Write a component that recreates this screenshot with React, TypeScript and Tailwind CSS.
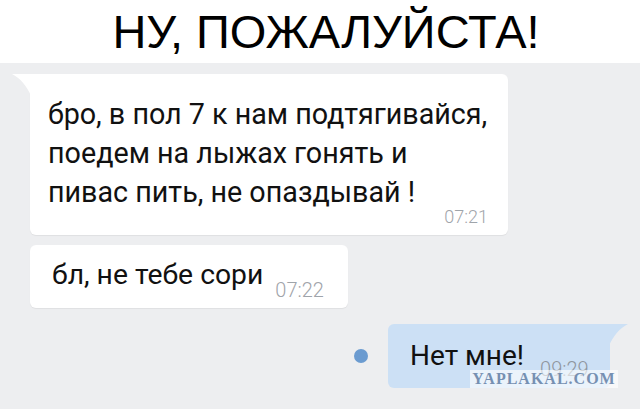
export default function App() {
  return (
    <div className="w-[640px] h-[409px] overflow-hidden bg-[#edeef0] relative font-['Roboto',sans-serif]">
      {/* Title */}
      <div className="h-[63px] bg-white flex items-center justify-center pl-3">
        <h1 className="font-['Liberation_Sans',Arial,sans-serif] text-[47px] leading-none text-black pb-[1px]">
          НУ, ПОЖАЛУЙСТА!
        </h1>
      </div>

      <div className="flex flex-col">
        {/* incoming 1 */}
        <div className="relative ml-[30px] mt-[11px] w-[478px] h-[161px] bg-white rounded-r-[6px] rounded-bl-[6px] shadow-[0_1px_1px_rgba(0,0,0,0.06)]">
          <svg className="absolute left-[-18px] top-0" width="19" height="22" viewBox="0 0 19 22">
            <path d="M0 0 H19 V22 C15 12 8 4 0 0 Z" fill="#ffffff" />
          </svg>
          <div className="pl-[18px] pt-[21px] text-[28.7px] leading-[39px] text-[#111]">
            <div>бро, в пол 7 к нам подтягивайся,</div>
            <div>поедем на лыжах гонять и</div>
            <div>пивас пить, не опаздывай !</div>
          </div>
          <div className="absolute right-[20px] bottom-[5px] text-[18px] font-light text-[#9fa4aa]">07:21</div>
        </div>

        {/* incoming 2 */}
        <div className="ml-[30px] mt-[10px] w-[318px] h-[63px] bg-white rounded-[6px] flex items-center pl-[22px] shadow-[0_1px_1px_rgba(0,0,0,0.06)]">
          <span className="text-[28.3px] leading-none text-[#111] pb-[2px]">бл, не тебе сори</span>
          <span className="ml-[12px] mt-[26px] text-[20px] leading-none font-light text-[#9fa4aa]">07:22</span>
        </div>

        {/* outgoing */}
        <div className="flex items-center mt-[16px] ml-[354px]">
          <div className="w-[14px] h-[14px] rounded-full bg-[#6b9bd0]" />
          <div className="relative ml-[20px] w-[222px] h-[64px] bg-[#cce0f5] rounded-l-[6px] rounded-br-[6px] flex items-center pl-[22px]">
            <svg className="absolute right-[-18px] top-0" width="19" height="22" viewBox="0 0 19 22">
              <path d="M19 0 H0 V22 C4 12 11 4 19 0 Z" fill="#cce0f5" />
            </svg>
            <span className="text-[28px] leading-none text-[#111] pb-[1px]">Нет мне!</span>
            <span className="ml-[16px] mt-[26px] text-[20px] leading-none font-light text-[#8f969e]">09:29</span>
          </div>
        </div>
      </div>

      {/* watermark */}
      <div className="absolute left-[470px] top-[370px] w-[148px] h-[18px] bg-white/60 flex items-center justify-center">
        <span className="font-['Liberation_Serif',serif] font-black text-[16px] leading-none text-[#7690b2] tracking-[1px]">
          YAPLAKAL.COM
        </span>
      </div>
    </div>
  );
}
